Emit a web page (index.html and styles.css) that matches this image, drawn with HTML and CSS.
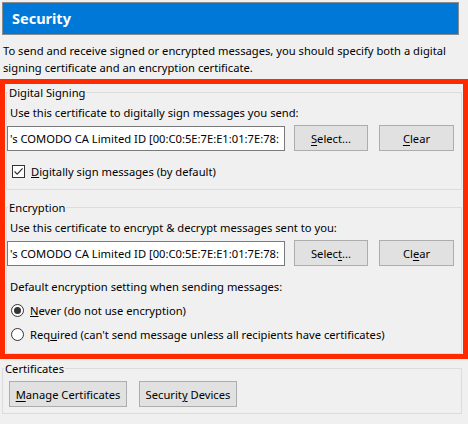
FILE: index.html
```html
<!DOCTYPE html>
<html>
<head>
<meta charset="utf-8">
<link rel="stylesheet" href="styles.css">
</head>
<body>
<div class="header">Security</div>
<p class="intro">To send and receive signed or encrypted messages, you should specify both a digital signing certificate and an encryption certificate.</p>
<div class="frame">
  <fieldset class="group sign">
    <legend>Digital Signing</legend>
    <div class="line first">Use this certificate to digitally sign messages you send:</div>
    <div class="certrow">
      <div class="input">'s COMODO CA Limited ID [00:C0:5E:7E:E1:01:7E:78:</div>
      <button class="btn sel"><u>S</u>elect...</button>
      <button class="btn clr"><u>C</u>lear</button>
    </div>
    <label class="opt check-opt"><span class="checkbox"><svg width="11" height="11" viewBox="0 0 11 11"><path d="M1.5 5.5 L4.2 8.2 L9.6 2.3" fill="none" stroke="#333" stroke-width="1.2"/></svg></span><span><u>D</u>igitally sign messages (by default)</span></label>
  </fieldset>
  <fieldset class="group enc">
    <legend>Encryption</legend>
    <div class="line first">Use this certificate to encrypt &amp; decrypt messages sent to you:</div>
    <div class="certrow">
      <div class="input">'s COMODO CA Limited ID [00:C0:5E:7E:E1:01:7E:78:</div>
      <button class="btn sel">Selec<u>t</u>...</button>
      <button class="btn clr">Cl<u>e</u>ar</button>
    </div>
    <div class="line default">Default encryption setting when sending messages:</div>
    <label class="opt radio-opt"><span class="radio on"></span><span><u>N</u>ever (do not use encryption)</span></label>
    <label class="opt radio-opt second"><span class="radio"></span><span>Req<u>u</u>ired (can't send message unless all recipients have certificates)</span></label>
  </fieldset>
</div>
<fieldset class="group certs">
  <legend>Certificates</legend>
  <div class="btnrow">
    <button class="btn manage"><u>M</u>anage Certificates</button>
    <button class="btn devices">Securit<u>y</u> Devices</button>
  </div>
</fieldset>
</body>
</html>
```
FILE: styles.css
```css
html, body {
  margin: 0;
  padding: 0;
  background: #f0f0f0;
}
body {
  font-family: "Noto Sans", "Open Sans", sans-serif;
  font-size: 11.2px;
  color: #000;
  width: 468px;
  height: 424px;
  overflow: hidden;
}
.header {
  margin: 2px 9px 0 2px;
  height: 31px;
  border: 1px solid #8c8c8c;
  background: #0078d7;
  color: #fff;
  font-weight: bold;
  font-size: 14.5px;
  line-height: 31px;
  padding-left: 9px;
}
.intro {
  margin: 7px 0 0 0;
  padding: 0 3px;
  line-height: 17px;
  height: 37px;
}
.frame {
  border: 5px solid #ff2a00;
  padding: 0 1px;
}
.group {
  border: 1px solid #dcdcdc;
  margin: 0;
  padding: 0;
  min-width: 0;
}
.group legend {
  padding: 0 1px;
  margin-left: 1px;
  line-height: 17px;
}
.line {
  line-height: 17px;
  padding-left: 3px;
}
.line.first {
  margin-top: 3px;
}
.certrow {
  display: flex;
  align-items: center;
  margin-top: 4px;
  height: 26px;
}
.input {
  box-sizing: border-box;
  width: 278px;
  height: 25px;
  border: 1px solid #7a7a7a;
  background: #fff;
  line-height: 23px;
  padding-left: 2px;
  white-space: nowrap;
  overflow: hidden;
}
.btn {
  box-sizing: border-box;
  height: 26px;
  border: 1px solid #adadad;
  background: #e1e1e1;
  font: inherit;
  color: #000;
  padding: 0;
  margin: 0;
}
.btn u { text-underline-offset: 2px; }
.sel { width: 74px; margin-left: 9px; }
.clr { width: 75px; margin-left: 11px; }
.opt {
  display: flex;
  align-items: center;
  line-height: 17px;
  gap: 6px;
}
.check-opt {
  margin-top: 12px;
  padding-left: 5px;
  margin-bottom: 9px;
}
.checkbox {
  box-sizing: border-box;
  width: 13px;
  height: 13px;
  border: 1px solid #333;
  background: #fff;
  display: flex;
  align-items: center;
  justify-content: center;
}
.enc {
  margin-top: 9px;
}
.line.default {
  margin-top: 12px;
}
.radio-opt {
  margin-top: 7px;
  padding-left: 4px;
}
.radio-opt.second {
  margin-bottom: 10px;
}
.radio {
  box-sizing: border-box;
  width: 13px;
  height: 13px;
  border: 1px solid #333;
  border-radius: 50%;
  background: #fff;
  display: flex;
  align-items: center;
  justify-content: center;
}
.radio.on::after {
  content: "";
  width: 7px;
  height: 7px;
  border-radius: 50%;
  background: #333;
}
.certs {
  margin: 1px 6px 0 2px;
  padding-bottom: 6px;
}
.btnrow {
  display: flex;
  margin-top: 4px;
  padding-left: 6px;
  gap: 12px;
}
.manage { width: 118px; }
.devices { width: 98px; }
```
